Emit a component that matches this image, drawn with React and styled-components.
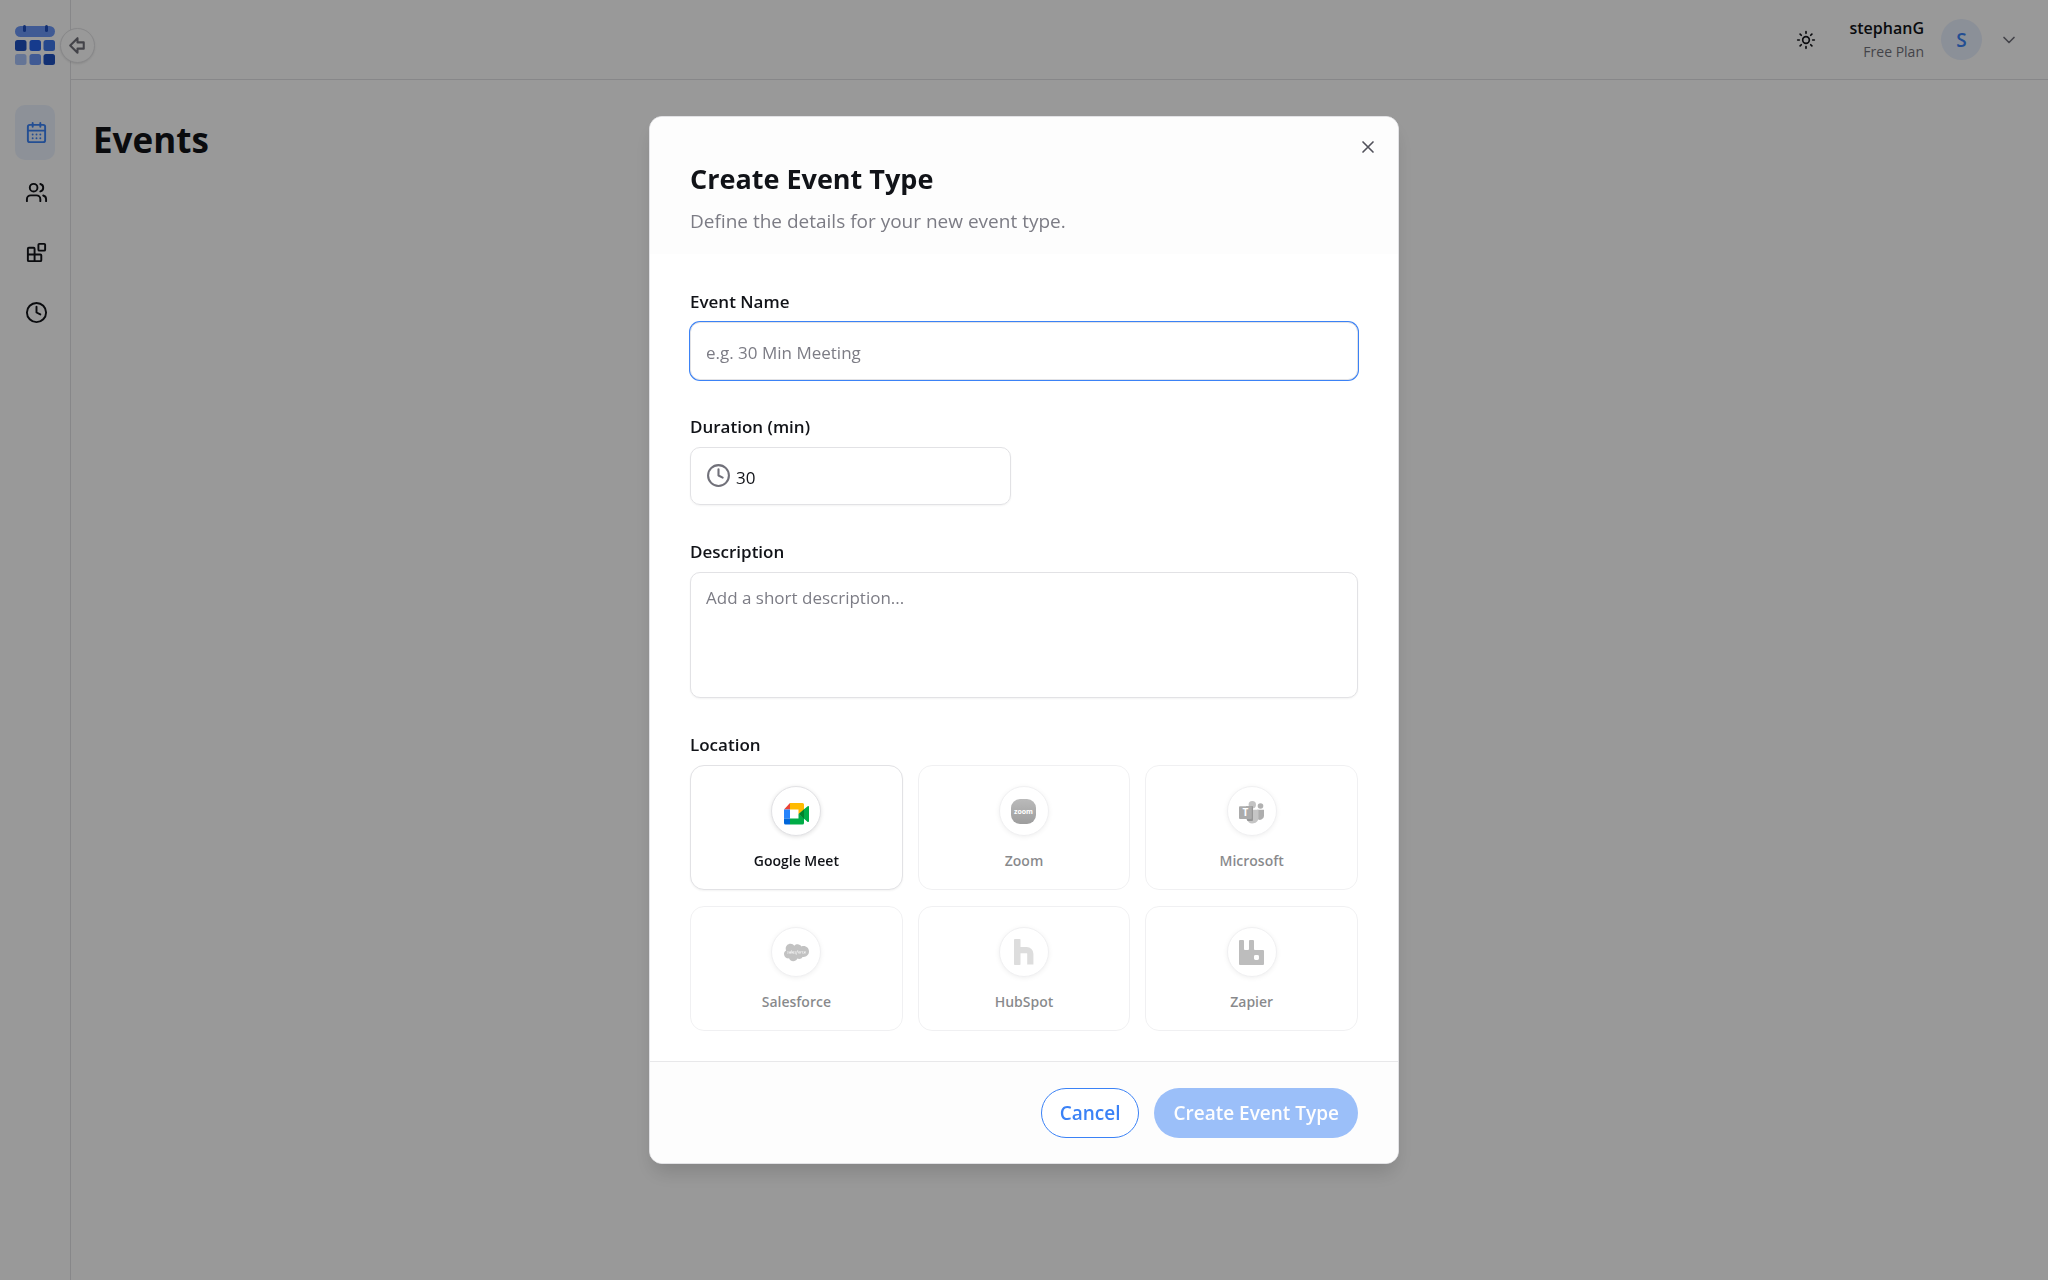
import React, { useState } from "react";
import styled, { createGlobalStyle } from "styled-components";
import { FaSalesforce } from "react-icons/fa";
import { SiRabbitmq } from "react-icons/si";

const GlobalStyle = createGlobalStyle`
  * {
    box-sizing: border-box;
  }

  body {
    margin: 0;
    background: #fff;
    color: #111318;
    font-family: "Open Sans", "Noto Sans", sans-serif;
    font-size: 16px;
  }

  h1, h2, p {
    margin: 0;
  }

  button, input, textarea {
    font-family: inherit;
  }
`;

const Page = styled.div`
  display: flex;
  min-height: 100vh;
`;

const Sidebar = styled.aside`
  position: relative;
  flex: none;
  width: 71px;
  padding: 25px 15px;
  border-right: 1px solid #e2e2e5;
`;

const LogoLink = styled.a`
  display: block;
  height: 40px;
  margin-bottom: 40px;
`;

const CollapseButton = styled.button`
  position: absolute;
  top: 28px;
  right: -25px;
  display: flex;
  align-items: center;
  justify-content: center;
  width: 35px;
  height: 35px;
  padding: 0;
  border: 1px solid #e2e2e5;
  border-radius: 50%;
  background: #fff;
  color: #71717a;
  box-shadow: 0 1px 2px rgba(0, 0, 0, 0.1);
`;

const SideNav = styled.nav`
  display: flex;
  flex-direction: column;
  gap: 5px;
`;

const SideLink = styled.a`
  display: flex;
  align-items: center;
  height: 55px;
  padding-left: 10px;
  border-radius: 10px;
  color: ${({ $active }) => ($active ? "#3b82f6" : "#111318")};
  background: ${({ $active }) => ($active ? "#ebf2fe" : "transparent")};
`;

const Content = styled.div`
  flex: 1;
  min-width: 0;
`;

const Topbar = styled.header`
  display: flex;
  align-items: center;
  justify-content: flex-end;
  height: 80px;
  padding: 0 29px;
  border-bottom: 1px solid #e2e2e5;
`;

const IconButton = styled.button`
  display: flex;
  padding: 0;
  border: 0;
  background: none;
  color: ${({ $color }) => $color || "#111318"};
`;

const UserText = styled.div`
  margin: 0 17px 0 33px;
  text-align: right;
`;

const UserName = styled.p`
  font-size: 16px;
  font-weight: 600;
  line-height: 24px;
`;

const UserPlan = styled.p`
  color: #71717a;
  font-size: 14px;
  line-height: 24px;
`;

const Avatar = styled.span`
  display: flex;
  align-items: center;
  justify-content: center;
  width: 41px;
  height: 41px;
  margin-right: 17px;
  border-radius: 50%;
  background: #e8f0fd;
  color: #3b82f6;
  font-size: 19px;
  font-weight: 600;
`;

const PageTitle = styled.h1`
  padding: 34px 22px;
  font-size: 35px;
  line-height: 52px;
`;

const Overlay = styled.div`
  position: fixed;
  inset: 0;
  display: flex;
  align-items: center;
  justify-content: center;
  background: rgba(0, 0, 0, 0.4);
`;

const Dialog = styled.form`
  position: relative;
  width: 100%;
  max-width: 750px;
  border: 1px solid #e2e2e5;
  border-radius: 13px;
  background: #fff;
  box-shadow: 0 12px 20px -4px rgba(0, 0, 0, 0.15);
  overflow: hidden;
`;

const CloseButton = styled(IconButton)`
  position: absolute;
  top: 20px;
  right: 20px;
`;

const DialogHeader = styled.div`
  display: flex;
  flex-direction: column;
  gap: 7px;
  padding: 42px 40px 18px;
  background: #fdfdfd;
`;

const DialogTitle = styled.h2`
  font-size: 27px;
  line-height: 40px;
`;

const DialogText = styled.p`
  color: #7c7c85;
  font-size: 19px;
  line-height: 30px;
`;

const DialogBody = styled.div`
  display: flex;
  flex-direction: column;
  gap: 35px;
  padding: 36px 40px 30px;
`;

const Field = styled.div`
  display: flex;
  flex-direction: column;
  gap: 8px;
`;

const Label = styled.label`
  font-size: 17px;
  font-weight: 600;
  line-height: 24px;
`;

const TextInput = styled.input`
  width: 100%;
  height: 58px;
  padding: 2px 15px 0;
  border: 1px solid #e2e2e5;
  border-radius: 10px;
  background: #fff;
  color: #111318;
  font-size: 17px;
  outline: none;
  box-shadow: 0 1px 2px rgba(0, 0, 0, 0.05);

  &::placeholder {
    color: #7c7c85;
  }

  &:focus {
    box-shadow: 0 0 0 1px #3b82f6;
  }
`;

const DurationBox = styled.div`
  display: flex;
  align-items: center;
  gap: 5px;
  width: 48%;
  height: 58px;
  padding: 0 15px 2px;
  border: 1px solid #e2e2e5;
  border-radius: 10px;
  color: #71717a;
  box-shadow: 0 1px 2px rgba(0, 0, 0, 0.05);

  svg {
    flex: none;
  }
`;

const DurationInput = styled.input`
  flex: 1;
  min-width: 0;
  padding: 4px 0 0;
  border: 0;
  background: none;
  color: #111318;
  font-size: 17px;
  outline: none;
`;

const TextArea = styled.textarea`
  display: block;
  width: 100%;
  height: 126px;
  padding: 12px 15px;
  border: 1px solid #e2e2e5;
  border-radius: 10px;
  color: #111318;
  font-size: 17px;
  line-height: 26px;
  outline: none;
  resize: none;
  box-shadow: 0 1px 2px rgba(0, 0, 0, 0.05);

  &::placeholder {
    color: #7c7c85;
  }
`;

const LocationGrid = styled.div`
  display: grid;
  grid-template-columns: repeat(3, 1fr);
  gap: 16px 15px;
`;

const LocationCard = styled.button`
  display: flex;
  flex-direction: column;
  align-items: center;
  gap: 15px;
  height: 125px;
  padding: 20px 10px 0;
  border: 1px solid #e2e2e5;
  border-radius: 14px;
  background: #fff;
  color: #111318;
  font-size: 14px;
  font-weight: 600;
  line-height: 20px;
  box-shadow: 0 1px 2px rgba(0, 0, 0, 0.05);

  &:disabled {
    opacity: 0.5;
    box-shadow: none;
  }
`;

const LogoCircle = styled.span`
  display: flex;
  align-items: center;
  justify-content: center;
  width: 50px;
  height: 50px;
  border: 1px solid #e2e2e5;
  border-radius: 50%;
  background: #fff;
  box-shadow: 0 1px 4px rgba(0, 0, 0, 0.12);
`;

const DialogFooter = styled.div`
  display: flex;
  justify-content: flex-end;
  gap: 15px;
  padding: 26px 40px 25px;
  border-top: 1px solid #e8e8ea;
  background: #fdfdfd;
`;

const Button = styled.button`
  height: 50px;
  padding: 0 18px;
  border: 1px solid ${({ $primary }) => ($primary ? "transparent" : "#3b82f6")};
  border-radius: 25px;
  background: ${({ $primary }) => ($primary ? "#3b82f6" : "#fff")};
  color: ${({ $primary }) => ($primary ? "#fff" : "#3b82f6")};
  font-size: 19px;
  font-weight: 600;

  &:disabled {
    opacity: 0.5;
  }
`;

const Icon = ({ size, stroke = 2, children }) => (
  <svg
    width={size}
    height={size}
    viewBox="0 0 24 24"
    fill="none"
    stroke="currentColor"
    strokeWidth={stroke}
    strokeLinecap="round"
    strokeLinejoin="round"
    aria-hidden="true"
  >
    {children}
  </svg>
);

const ClockIcon = ({ size }) => (
  <Icon size={size}>
    <circle cx="12" cy="12" r="10" />
    <path d="M12 6v6l4 2" />
  </Icon>
);

const CalendarIcon = () => (
  <Icon size={23}>
    <path d="M8 2v4M16 2v4M3 10h18" />
    <rect x="3" y="4" width="18" height="18" rx="2" />
    <path d="M8 14h.01M12 14h.01M16 14h.01M8 18h.01M12 18h.01M16 18h.01" />
  </Icon>
);

const UsersIcon = () => (
  <Icon size={23}>
    <path d="M16 21v-2a4 4 0 0 0-4-4H6a4 4 0 0 0-4 4v2" />
    <circle cx="9" cy="7" r="4" />
    <path d="M22 21v-2a4 4 0 0 0-3-3.87M16 3.13a4 4 0 0 1 0 7.75" />
  </Icon>
);

const BlocksIcon = () => (
  <Icon size={23}>
    <rect x="14" y="3" width="7" height="7" rx="1" />
    <path d="M10 21V8a1 1 0 0 0-1-1H4a1 1 0 0 0-1 1v12a1 1 0 0 0 1 1h12a1 1 0 0 0 1-1v-5a1 1 0 0 0-1-1H3" />
  </Icon>
);

const AppLogo = () => (
  <svg width="40" height="40" viewBox="0 0 40 40" aria-hidden="true">
    <rect y="1" width="40" height="11" rx="5.5" fill="#6b97f7" />
    <rect x="8" width="3" height="7" rx="1.5" fill="#1e4fbf" />
    <rect x="30" width="3" height="7" rx="1.5" fill="#1e4fbf" />
    <rect y="15" width="11.5" height="11" rx="2.5" fill="#1e50c0" />
    <rect x="14.5" y="15" width="11.5" height="11" rx="2.5" fill="#2563eb" />
    <rect x="28.5" y="15" width="11.5" height="11" rx="2.5" fill="#3f77ea" />
    <rect y="29" width="11.5" height="11" rx="2.5" fill="#a9c3fb" />
    <rect x="14.5" y="29" width="11.5" height="11" rx="2.5" fill="#6b97f7" />
    <rect x="28.5" y="29" width="11.5" height="11" rx="2.5" fill="#1e50c0" />
  </svg>
);

const MeetLogo = () => (
  <svg width="25" height="30" viewBox="0 -5 25 30" aria-hidden="true">
    <path d="M6 2v6.5H0z" fill="#ea4335" />
    <path d="M0 8.5h6v9H0z" fill="#2684fc" />
    <path d="M0 17.5h6v6H1.5A1.5 1.5 0 0 1 0 22z" fill="#0066da" />
    <path d="M6 17.5h8.5v-4.5l5.5 4V22a1.5 1.5 0 0 1-1.5 1.5H6z" fill="#00ac47" />
    <path d="M6 2h12.5A1.5 1.5 0 0 1 20 3.5V9l-5.5 4V8.5H6z" fill="#ffba00" />
    <path d="M20 8.2V17.8L14.5 13z" fill="#00832d" />
    <path d="M20 8.2l3.7-3c.6-.5 1.3-.1 1.3.6v14.5c0 .7-.7 1.1-1.3.6L20 17.8z" fill="#00ac47" />
  </svg>
);

const ZoomLogo = () => (
  <svg width="25" height="25" viewBox="0 0 25 25" aria-hidden="true">
    <defs>
      <linearGradient id="zoomFill" x1="0" y1="0" x2="0" y2="1">
        <stop offset="0" stopColor="#777" />
        <stop offset="1" stopColor="#3d3d3d" />
      </linearGradient>
    </defs>
    <rect width="25" height="25" rx="9" fill="url(#zoomFill)" />
    <text
      x="12.5"
      y="14.5"
      textAnchor="middle"
      fontSize="7"
      fontWeight="700"
      fill="#fff"
    >
      zoom
    </text>
  </svg>
);

const TeamsLogo = () => (
  <svg width="25" height="25" viewBox="0 0 25 25" aria-hidden="true">
    <circle cx="21.5" cy="7" r="2.8" fill="#656565" />
    <path d="M18 10.8h7v6a4 4 0 0 1-7 2.7z" fill="#5f5f5f" />
    <circle cx="13.3" cy="5.8" r="3.7" fill="#888" />
    <path d="M8 10.8h11.5v8a6 6 0 0 1-11.5 2z" fill="#8c8c8c" />
    <path d="M7 7.2h7v13.8a1 1 0 0 1-1 1H8.5L7 19z" fill="#2f2f2f" />
    <rect y="7.2" width="12.8" height="12.8" rx="1" fill="#585858" />
    <text
      x="6.4"
      y="17"
      textAnchor="middle"
      fontSize="10"
      fontWeight="700"
      fill="#fff"
    >
      T
    </text>
  </svg>
);

const HubSpotLogo = () => (
  <svg width="25" height="26" viewBox="0 0 25 26" aria-hidden="true">
    <rect x="3" width="6.5" height="26" rx="0.8" fill="#bcbcbc" />
    <path
      d="M6.5 11.2h9.2a3.6 3.6 0 0 1 3.6 3.6V25.6"
      fill="none"
      stroke="#bcbcbc"
      strokeWidth="6.2"
    />
  </svg>
);

const navItems = [
  { label: "Events", icon: <CalendarIcon />, active: true },
  { label: "Contacts", icon: <UsersIcon /> },
  { label: "Integrations", icon: <BlocksIcon /> },
  { label: "Availability", icon: <ClockIcon size={23} /> },
];

const locations = [
  { name: "Google Meet", logo: <MeetLogo />, available: true },
  { name: "Zoom", logo: <ZoomLogo /> },
  { name: "Microsoft", logo: <TeamsLogo /> },
  { name: "Salesforce", logo: <FaSalesforce size={25} color="#858585" /> },
  { name: "HubSpot", logo: <HubSpotLogo /> },
  { name: "Zapier", logo: <SiRabbitmq size={25} color="#7c7c7c" /> },
];

const App = () => {
  const [name, setName] = useState("");
  const [duration, setDuration] = useState("30");
  const [description, setDescription] = useState("");

  return (
    <>
      <GlobalStyle />
      <Page>
        <Sidebar>
          <LogoLink href="#" aria-label="Home">
            <AppLogo />
          </LogoLink>
          <CollapseButton aria-label="Toggle sidebar">
            <Icon size={25}>
              <path d="M18 15h-6v4l-7-7 7-7v4h6v6z" />
            </Icon>
          </CollapseButton>
          <SideNav>
            {navItems.map((item) => (
              <SideLink
                key={item.label}
                href="#"
                aria-label={item.label}
                $active={item.active}
              >
                {item.icon}
              </SideLink>
            ))}
          </SideNav>
        </Sidebar>
        <Content>
          <Topbar>
            <IconButton aria-label="Toggle theme">
              <Icon size={20}>
                <circle cx="12" cy="12" r="4" />
                <path d="M12 2v2M12 20v2M4.93 4.93l1.41 1.41M17.66 17.66l1.41 1.41M2 12h2M20 12h2M6.34 17.66l-1.41 1.41M19.07 4.93l-1.41 1.41" />
              </Icon>
            </IconButton>
            <UserText>
              <UserName>stephanG</UserName>
              <UserPlan>Free Plan</UserPlan>
            </UserText>
            <Avatar>S</Avatar>
            <IconButton aria-label="Account menu" $color="#71717a">
              <Icon size={20}>
                <path d="m6 9 6 6 6-6" />
              </Icon>
            </IconButton>
          </Topbar>
          <PageTitle>Events</PageTitle>
        </Content>
      </Page>
      <Overlay>
        <Dialog
          role="dialog"
          aria-modal="true"
          aria-labelledby="dialog-title"
          onSubmit={(e) => e.preventDefault()}
        >
          <DialogHeader>
            <DialogTitle id="dialog-title">Create Event Type</DialogTitle>
            <DialogText>Define the details for your new event type.</DialogText>
          </DialogHeader>
          <DialogBody>
            <Field>
              <Label htmlFor="name">Event Name</Label>
              <TextInput
                id="name"
                autoFocus
                placeholder="e.g. 30 Min Meeting"
                value={name}
                onChange={(e) => setName(e.target.value)}
              />
            </Field>
            <Field>
              <Label htmlFor="duration">Duration (min)</Label>
              <DurationBox>
                <ClockIcon size={25} />
                <DurationInput
                  id="duration"
                  inputMode="numeric"
                  value={duration}
                  onChange={(e) => setDuration(e.target.value)}
                />
              </DurationBox>
            </Field>
            <Field>
              <Label htmlFor="description">Description</Label>
              <TextArea
                id="description"
                placeholder="Add a short description..."
                value={description}
                onChange={(e) => setDescription(e.target.value)}
              />
            </Field>
            <Field role="group" aria-labelledby="location-label">
              <Label as="span" id="location-label">
                Location
              </Label>
              <LocationGrid>
                {locations.map((item) => (
                  <LocationCard
                    key={item.name}
                    type="button"
                    disabled={!item.available}
                  >
                    <LogoCircle>{item.logo}</LogoCircle>
                    {item.name}
                  </LocationCard>
                ))}
              </LocationGrid>
            </Field>
          </DialogBody>
          <DialogFooter>
            <Button type="button">Cancel</Button>
            <Button type="submit" $primary disabled={!name}>
              Create Event Type
            </Button>
          </DialogFooter>
          <CloseButton type="button" aria-label="Close" $color="#52525b">
            <Icon size={20}>
              <path d="M18 6 6 18M6 6l12 12" />
            </Icon>
          </CloseButton>
        </Dialog>
      </Overlay>
    </>
  );
};

export default App;
